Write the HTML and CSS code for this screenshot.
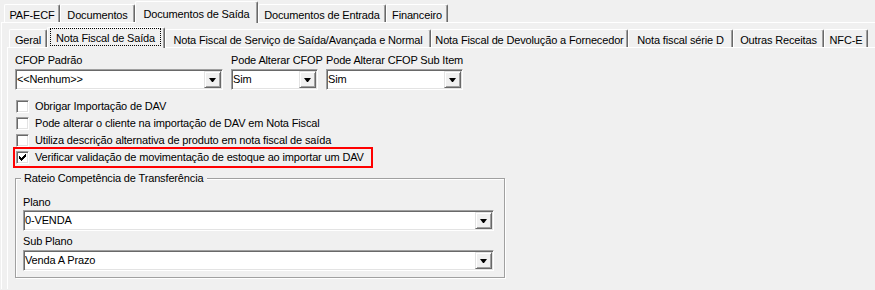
FILE: index.html
```
<!DOCTYPE html>
<html lang="pt-BR">
<head>
    <meta charset="UTF-8">
    <meta name="viewport" content="width=device-width, initial-scale=1.0">
    <title>Configurações - Documentos de Saída</title>
    <link rel="stylesheet" href="styles.css">
</head>
<body>
    <div class="outer">
        <div class="tabrow">
            <div class="tab t-paf">PAF-ECF</div>
            <div class="tab t-doc">Documentos</div>
            <div class="tab active t-saida">Documentos de Saída</div>
            <div class="tab t-entrada">Documentos de Entrada</div>
            <div class="tab t-fin">Financeiro</div>
        </div>
        <div class="page">
            <div class="inner">
                <div class="tabrow">
                    <div class="tab t-geral">Geral</div>
                    <div class="tab active t-nfs"><span class="focus">Nota Fiscal de Saída</span></div>
                    <div class="tab t-serv">Nota Fiscal de Serviço de Saída/Avançada e Normal</div>
                    <div class="tab t-dev">Nota Fiscal de Devolução a Fornecedor</div>
                    <div class="tab t-serie">Nota fiscal série D</div>
                    <div class="tab t-outras">Outras Receitas</div>
                    <div class="tab t-nfce">NFC-E</div>
                </div>
                <div class="page form">
                    <div class="fields">
                        <div class="field f-cfop">
                            <div class="lbl">CFOP Padrão</div>
                            <div class="combo"><span class="combo-text">&lt;&lt;Nenhum&gt;&gt;</span><span class="combo-btn"></span></div>
                        </div>
                        <div class="field f-alt">
                            <div class="lbl">Pode Alterar CFOP</div>
                            <div class="combo"><span class="combo-text">Sim</span><span class="combo-btn"></span></div>
                        </div>
                        <div class="field f-sub">
                            <div class="lbl">Pode Alterar CFOP Sub Item</div>
                            <div class="combo"><span class="combo-text">Sim</span><span class="combo-btn"></span></div>
                        </div>
                    </div>

                    <div class="checks">
                        <div class="check"><span class="box"></span>Obrigar Importação de DAV</div>
                        <div class="check"><span class="box"></span>Pode alterar o cliente na importação de DAV em Nota Fiscal</div>
                        <div class="check"><span class="box"></span>Utiliza descrição alternativa de produto em nota fiscal de saída</div>
                        <div class="check marked">
                            <span class="box">
                                <svg width="9" height="9" viewBox="0 0 9 9" shape-rendering="crispEdges">
                                    <path d="M7 1h1v1h-1z M6 2h2v1h-2z M1 3h1v1h-1z M5 3h3v1h-3z M1 4h2v1h-2z M4 4h3v1h-3z M1 5h5v1h-5z M2 6h3v1h-3z M3 7h1v1h-1z" fill="#000"/>
                                </svg>
                            </span>Verificar validação de movimentação de estoque ao importar um DAV
                        </div>
                    </div>

                    <fieldset class="group">
                        <legend>Rateio Competência de Transferência</legend>
                        <div class="lbl">Plano</div>
                        <div class="combo wide first"><span class="combo-text">0-VENDA</span><span class="combo-btn"></span></div>
                        <div class="lbl next">Sub Plano</div>
                        <div class="combo wide"><span class="combo-text">Venda A Prazo</span><span class="combo-btn"></span></div>
                    </fieldset>
                </div>
            </div>
        </div>
    </div>
</body>
</html>
```
FILE: styles.css
```
body {
    margin: 0;
    background: #f0f0f0;
    color: #000;
    font-family: "Liberation Sans", Arial, sans-serif;
    font-size: 11px;
    line-height: 13px;
    letter-spacing: -0.15px;
    overflow: hidden;
}

/* tab controls */
.outer {
    margin-left: 1px;
}
.tabrow {
    display: flex;
    align-items: flex-end;
}
.outer > .tabrow {
    height: 22px;
    padding-left: 3px;
}
.inner > .tabrow {
    height: 24px;
    padding-left: 2px;
}
.tab {
    box-sizing: border-box;
    height: 18px;
    padding-top: 4px;
    text-align: center;
    white-space: nowrap;
    border-top: 1px solid #fff;
    border-left: 1px solid #fff;
    border-right: 1px solid #696969;
    border-radius: 2px 2px 0 0;
    box-shadow: inset -1px 0 #a0a0a0;
}
.tab.active {
    position: relative;
    z-index: 1;
    height: 22px;
    margin-bottom: -1px;
    padding-top: 6px;
    background: #f0f0f0;
}
.inner .tab.active {
    height: 21px;
    padding: 0 0 0 2px;
}
.focus {
    display: block;
    box-sizing: border-box;
    width: 111px;
    height: 18px;
    padding-top: 3px;
    border: 1px dotted #000;
}
.t-paf { width: 56px; }
.t-doc { width: 75px; }
.t-saida { width: 123px; }
.t-entrada { width: 128px; }
.t-fin { width: 62px; }
.t-geral { width: 38px; }
.t-nfs { width: 118px; }
.t-serv { width: 266px; }
.t-dev { width: 197px; }
.t-serie { width: 105px; }
.t-outras { width: 91px; }
.t-nfce { width: 44px; }

.page {
    height: 266px;
    border-top: 1px solid #fff;
    border-left: 1px solid #fff;
    padding-left: 5px;
}
.page.form {
    height: 236px;
    padding: 6px 0 0 7px;
}

/* fields */
.fields {
    display: flex;
    gap: 8px;
}
.lbl {
    white-space: nowrap;
}
.f-cfop { width: 208px; }
.f-alt { width: 87px; }
.f-sub { width: 137px; }

.combo {
    display: flex;
    box-sizing: border-box;
    height: 21px;
    margin-top: 2px;
    padding: 1px;
    background: #fff;
    border: 1px solid;
    border-color: #a0a0a0 #fff #fff #a0a0a0;
    box-shadow: inset 1px 1px #696969, inset -1px -1px #e3e3e3;
}
.combo-text {
    flex: 1;
    line-height: 17px;
    white-space: nowrap;
    overflow: hidden;
}
.combo-btn {
    display: flex;
    align-items: center;
    justify-content: center;
    box-sizing: border-box;
    width: 17px;
    background: #f0f0f0;
    border: 1px solid;
    border-color: #e3e3e3 #696969 #696969 #e3e3e3;
    box-shadow: inset 1px 1px #fff, inset -1px -1px #a0a0a0;
}
.combo-btn::after {
    content: "";
    width: 1px;
    height: 0;
    border-top: 4px solid #000;
    border-left: 3px solid transparent;
    border-right: 3px solid transparent;
}
.combo.wide {
    width: 471px;
}
.combo.first {
    margin-top: 1px;
}
.lbl.next {
    margin-top: 4px;
}

/* checkboxes */
.checks {
    margin-top: 8px;
}
.check {
    display: flex;
    align-items: center;
    gap: 6px;
    height: 17px;
    padding-left: 1px;
    white-space: nowrap;
}
.box {
    display: flex;
    align-items: center;
    justify-content: center;
    box-sizing: border-box;
    width: 13px;
    height: 13px;
    background: #fff;
    border: 1px solid;
    border-color: #a0a0a0 #fff #fff #a0a0a0;
    box-shadow: inset 1px 1px #696969, inset -1px -1px #e3e3e3;
}
.check.marked {
    box-sizing: border-box;
    width: 360px;
    height: 21px;
    margin: -2px 0 -2px -2px;
    border: 2px solid #f00;
}

/* group box */
.group {
    box-sizing: border-box;
    width: 490px;
    min-width: 0;
    margin: 6px 0 0;
    padding: 11px 0 6px 7px;
    border: 1px solid #a0a0a0;
    box-shadow: inset 1px 1px #fff, 1px 1px #fff;
}
.group legend {
    margin-left: -2px;
    padding: 0 4px 0 3px;
    background: #f0f0f0;
    line-height: 13px;
}
```
